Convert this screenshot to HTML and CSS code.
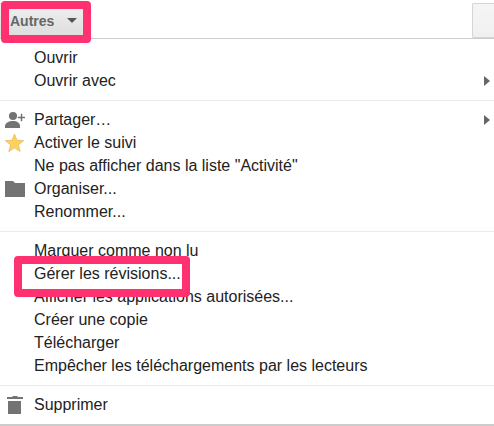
FILE: index.html
```html
<!DOCTYPE html>
<html lang="fr">
<head>
    <meta charset="UTF-8">
    <meta name="viewport" content="width=device-width, initial-scale=1.0">
    <title>Autres</title>
    <link rel="stylesheet" href="styles.css">
</head>
<body>

    <div class="toolbar">
        <div class="marked">
            <button class="btn-more" aria-haspopup="true" aria-expanded="true">
                Autres
                <svg width="10" height="5" viewBox="0 0 10 5"><path d="M0 0h10L5 5z" fill="#555"/></svg>
            </button>
            <span class="marker marker-more"></span>
        </div>
        <button class="btn-side" aria-label="Options"></button>
    </div>

    <div class="menu" role="menu">
        <div class="menu-group">
            <button class="item" role="menuitem"><span class="icon"></span>Ouvrir</button>
            <button class="item" role="menuitem">
                <span class="icon"></span>Ouvrir avec
                <svg class="arrow" width="6" height="10" viewBox="0 0 6 10"><path d="M0 0l6 5-6 5z" fill="#666"/></svg>
            </button>
        </div>

        <div class="menu-group">
            <button class="item" role="menuitem">
                <span class="icon"><svg width="20" height="18" viewBox="0 0 20 18" fill="#737373"><circle cx="8" cy="5" r="4"/><path d="M0 17v-2c0-3 4-5 8-5s7 2 7 5v2z"/><path d="M16 3h1v3h3v1h-3v3h-1V7h-3V6h3z" stroke="#737373" stroke-width=".5"/></svg></span>Partager…
                <svg class="arrow" width="6" height="10" viewBox="0 0 6 10"><path d="M0 0l6 5-6 5z" fill="#666"/></svg>
            </button>
            <button class="item" role="menuitem">
                <span class="icon"><svg width="20" height="20" viewBox="0 0 20 20"><path d="M9.500 1l2.400 6.300 6.800.3-5.300 4.300 1.800 6.700-5.700-3.800-5.700 3.800 1.800-6.700L.3 7.600l6.800-.3z" fill="#fdd15c" stroke="#e5bd62" stroke-width=".8"/></svg></span>Activer le suivi
            </button>
            <button class="item" role="menuitem"><span class="icon"></span>Ne pas afficher dans la liste "Activité"</button>
            <button class="item" role="menuitem">
                <span class="icon"><svg width="20" height="16" viewBox="0 0 20 16"><path d="M0 0h8l2 2h10v14H0z" fill="#737373"/></svg></span>Organiser...
            </button>
            <button class="item" role="menuitem"><span class="icon"></span>Renommer...</button>
        </div>

        <div class="menu-group">
            <button class="item" role="menuitem"><span class="icon"></span>Marquer comme non lu</button>
            <button class="item" role="menuitem">
                <span class="icon"></span><span class="marked">Gérer les révisions...<span class="marker marker-item"></span></span>
            </button>
            <button class="item" role="menuitem"><span class="icon"></span>Afficher les applications autorisées...</button>
            <button class="item" role="menuitem"><span class="icon"></span>Créer une copie</button>
            <button class="item" role="menuitem"><span class="icon"></span>Télécharger</button>
            <button class="item" role="menuitem"><span class="icon"></span>Empêcher les téléchargements par les lecteurs</button>
        </div>

        <div class="menu-group">
            <button class="item" role="menuitem">
                <span class="icon"><svg width="20" height="20" viewBox="0 0 20 20" fill="#737373"><path d="M2 2h5l1-1h4l1 1h5v2H2zM3 6h13v13H3z"/></svg></span>Supprimer
            </button>
        </div>
    </div>

</body>
</html>
```

FILE: styles.css
```css
body {
    margin: 0;
    background: #fff;
    color: #222;
    font-family: "Liberation Sans", Arial, sans-serif;
    font-size: 16px;
}
button {
    margin: 0;
    font-family: inherit;
    color: inherit;
    cursor: pointer;
}
svg {
    display: block;
}
.toolbar {
    display: flex;
    justify-content: space-between;
    padding-top: 3px;
}
.btn-more {
    display: flex;
    align-items: center;
    gap: 13px;
    height: 35px;
    padding: 0 7px 0 10px;
    border: 1px solid #ddd;
    border-left: none;
    background: linear-gradient(#f0f0f0, #ddd);
    color: #666;
    font-size: 14px;
    font-weight: bold;
}
.btn-side {
    width: 22px;
    height: 35px;
    border: 1px solid #d5d5d5;
    border-right: none;
    border-radius: 2px 0 0 2px;
    background: linear-gradient(#f5f5f5, #f0f0f0);
}
.menu {
    border-top: 1px solid #ccc;
    border-bottom: 2px solid #ccc;
}
.menu-group {
    padding: 7px 0 8px;
}
.menu-group + .menu-group {
    border-top: 1px solid #ebebeb;
}
.item {
    display: flex;
    align-items: center;
    width: 100%;
    height: 23px;
    padding: 0 4px 0 5px;
    border: none;
    background: none;
    font-size: 16px;
    line-height: 23px;
    text-align: left;
    white-space: nowrap;
}
.icon {
    flex: none;
    width: 29px;
}
.arrow {
    margin-left: auto;
}
/* pink frames around the steps to follow */
.marked {
    position: relative;
}
.marker {
    position: absolute;
    z-index: 1;
    border: 8px solid #ff3170;
    border-radius: 4px;
    pointer-events: none;
}
.marker-more {
    inset: -2px -6px -5px 1px;
}
.marker-item {
    inset: -6px -9px -12px -20px;
}
```
